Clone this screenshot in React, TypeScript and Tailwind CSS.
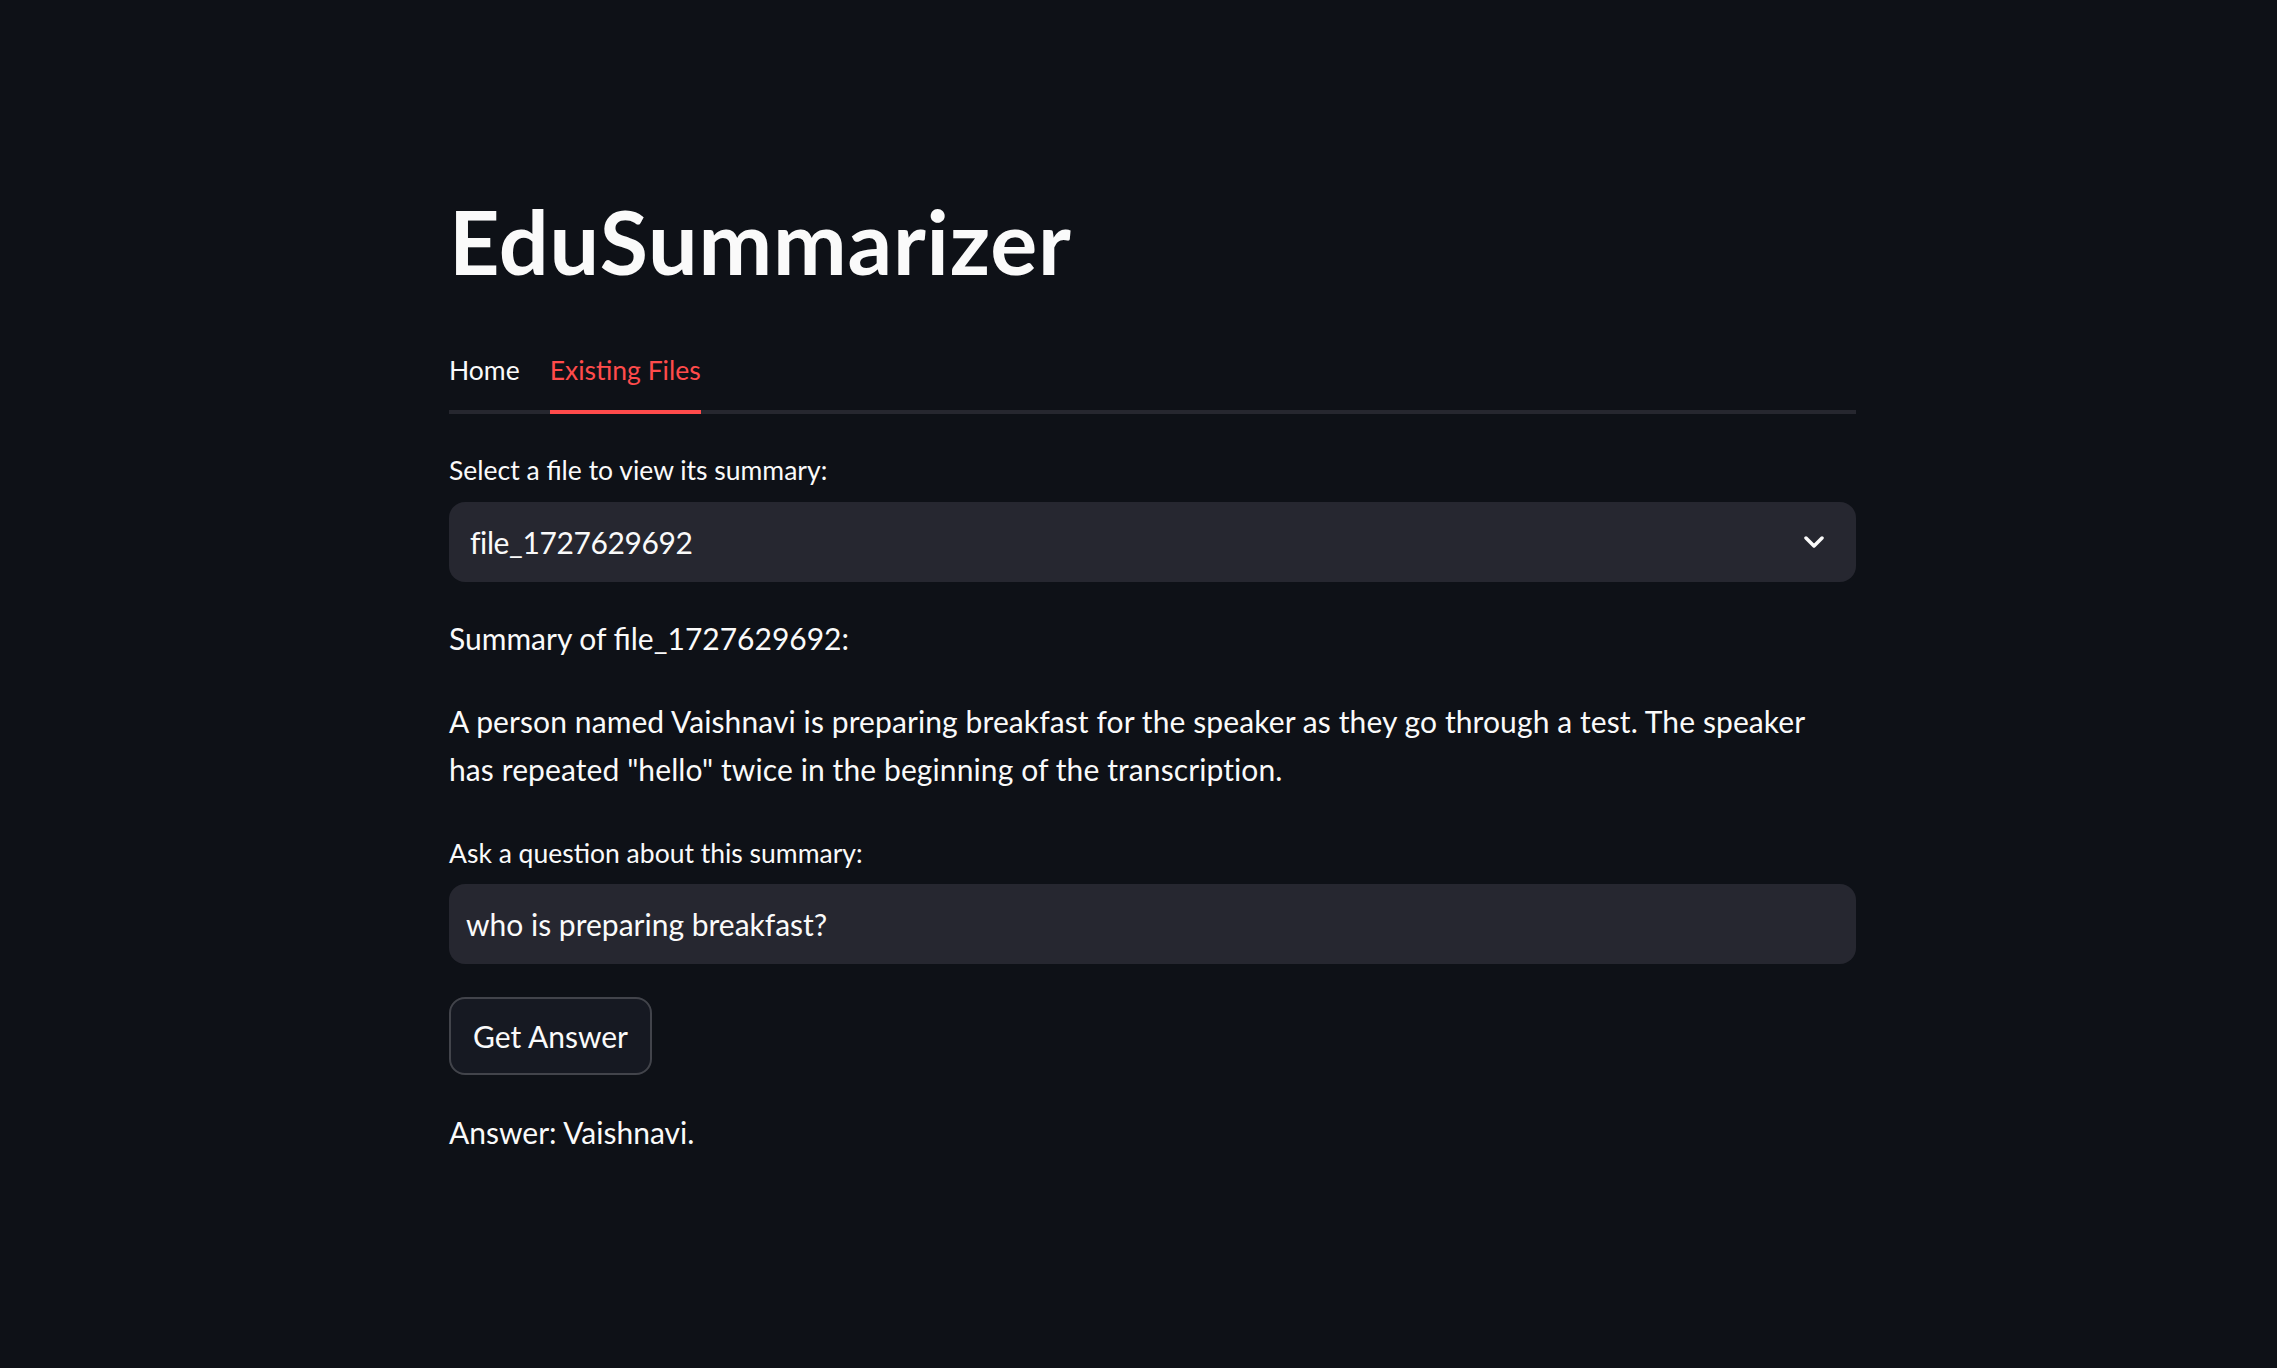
import { useState } from 'react';

const tabs = ['Home', 'Existing Files'];

export default function App() {
    const [activeTab, setActiveTab] = useState('Existing Files');
    const [question, setQuestion] = useState('who is preparing breakfast?');

    return (
        <div className="min-h-screen w-full bg-[#0e1117] text-[#fafafa] font-['Lato',sans-serif]">
            <div className="w-[1856px] pl-[449px] pt-[191px] pb-[200px]">
                {/* Title */}
                <h1 className="text-[88px] leading-[100px] font-bold tracking-[0.8px]">EduSummarizer</h1>

                {/* Tabs */}
                <div className="mt-[59px] flex gap-[30px] border-b-4 border-[#26272f]">
                    {tabs.map((tab) => (
                        <button
                            key={tab}
                            onClick={() => setActiveTab(tab)}
                            className={`-mb-1 pb-[20px] border-b-4 text-[26.5px] leading-[40px] ${activeTab === tab
                                ? 'border-[#ff4b4b] text-[#ff4b4b]'
                                : 'border-transparent text-[#fafafa]'
                                }`}
                        >
                            {tab}
                        </button>
                    ))}
                </div>

                {/* File select */}
                <label className="mt-[38px] block text-[26.5px] leading-[36px]">Select a file to view its summary:</label>
                <div className="mt-[14px] h-[80px] flex items-center justify-between rounded-[16px] bg-[#262730] pl-[21px] pr-[32px]">
                    <span className="text-[30px] tracking-[-0.4px]">file_1727629692</span>
                    <svg width="20" height="12" viewBox="0 0 20 12" fill="none">
                        <polyline points="2,2 10,10 18,2" stroke="#fafafa" strokeWidth="3.5" strokeLinecap="round" strokeLinejoin="round" />
                    </svg>
                </div>

                {/* Summary */}
                <p className="mt-[32px] text-[30px] leading-[48px]">Summary of file_1727629692:</p>
                <p className="mt-[35px] text-[30px] leading-[48px] tracking-[0.1px]">
                    A person named Vaishnavi is preparing breakfast for the speaker as they go through a test. The speaker
                    <br />
                    has repeated "hello" twice in the beginning of the transcription.
                </p>

                {/* Question */}
                <label className="mt-[42px] block text-[26.5px] leading-[36px]">Ask a question about this summary:</label>
                <input
                    value={question}
                    onChange={(e) => setQuestion(e.target.value)}
                    className="mt-[13px] block w-full h-[80px] rounded-[16px] bg-[#262730] pl-[17px] text-[30px] text-[#fafafa] outline-none"
                />

                <button className="mt-[33px] w-[203px] h-[78px] flex items-center justify-center rounded-[16px] border-2 border-[#42444b] bg-[#161922] text-[30px]">
                    Get Answer
                </button>

                <p className="mt-[33px] text-[30px] leading-[48px]">Answer: Vaishnavi.</p>
            </div>
        </div>
    );
}
